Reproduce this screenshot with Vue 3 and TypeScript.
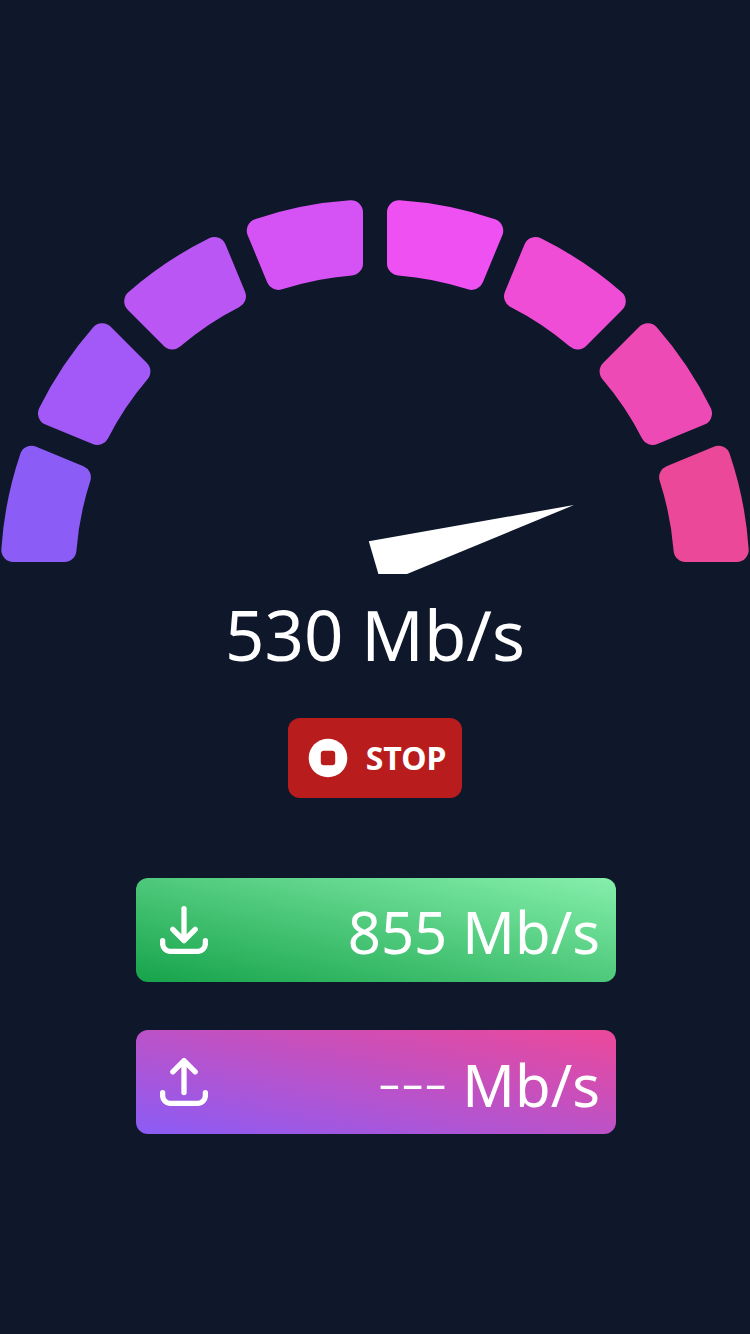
<script setup lang="ts">
interface Point {
  x: number
  y: number
}

const WIDTH = 750
const HEIGHT = 375
const OUTER = 374.5
const INNER = 299.5
const INSET = 12
const CORNER = 12

const colors: string[] = [
  '#8b5cf6',
  '#a259f7',
  '#ba56f3',
  '#d553f4',
  '#ef50f2',
  '#ef4dd6',
  '#ee4ab5',
  '#ec4899',
]

const center: Point = { x: WIDTH / 2, y: HEIGHT }

// Maps a point given along a ray and perpendicular to it onto the canvas.
function place(angle: number, along: number, side: number): Point {
  return {
    x: center.x + along * Math.cos(angle) - side * Math.sin(angle),
    y: center.y + along * Math.sin(angle) + side * Math.cos(angle),
  }
}

function show(p: Point): string {
  return `${p.x.toFixed(2)} ${p.y.toFixed(2)}`
}

// Tangent points of one rounded corner: on the straight side and on the arc.
function corner(angle: number, sign: number, radius: number, fillet: number) {
  const middle = radius - fillet
  const side = INSET + CORNER
  const along = Math.sqrt(middle * middle - side * side)
  const scale = radius / middle
  return {
    line: show(place(angle, along, sign * INSET)),
    arc: show(place(angle, along * scale, sign * side * scale)),
  }
}

function segmentPath(index: number): string {
  const step = Math.PI / colors.length
  const start = Math.PI + index * step
  const end = start + step
  const a = corner(start, 1, OUTER, CORNER)
  const b = corner(end, -1, OUTER, CORNER)
  const c = corner(end, -1, INNER, -CORNER)
  const d = corner(start, 1, INNER, -CORNER)
  const round = `A${CORNER} ${CORNER} 0 0 1`
  return [
    `M${a.line}`,
    `${round} ${a.arc}`,
    `A${OUTER} ${OUTER} 0 0 1 ${b.arc}`,
    `${round} ${b.line}`,
    `L${c.line}`,
    `${round} ${c.arc}`,
    `A${INNER} ${INNER} 0 0 0 ${d.arc}`,
    `${round} ${d.line}`,
    'Z',
  ].join(' ')
}

const segments = colors.map((fill, index) => ({ fill, d: segmentPath(index) }))
</script>

<template>
  <main class="page">
    <svg class="gauge" :viewBox="`0 0 ${WIDTH} ${HEIGHT}`" aria-hidden="true">
      <path v-for="s in segments" :key="s.fill" :d="s.d" :fill="s.fill" />
      <polygon points="368.8,342.3 574,306 407,375 378.4,375" fill="#fff" />
    </svg>

    <p class="speed">530 Mb/s</p>

    <button class="stop" type="button">
      <svg class="stop-icon" viewBox="0 0 48 48" aria-hidden="true">
        <circle cx="24" cy="24" r="19.3" fill="#fff" />
        <rect x="16.8" y="16.8" width="14.4" height="14.4" rx="3" fill="#b91c1c" />
      </svg>
      <span>STOP</span>
    </button>

    <section class="results">
      <div class="bar download">
        <svg class="bar-icon" viewBox="0 0 48 48" aria-hidden="true">
          <path d="M2.6 34.6V37.4a8 8 0 0 0 8 8H37.4a8 8 0 0 0 8-8V34.6" />
          <path d="M24 2.7V34.5M12.8 23.4L24 34.6L35.2 23.4" />
        </svg>
        <span class="value">855 Mb/s</span>
      </div>
      <div class="bar upload">
        <svg class="bar-icon" viewBox="0 0 48 48" aria-hidden="true">
          <path d="M2.6 34.6V37.4a8 8 0 0 0 8 8H37.4a8 8 0 0 0 8-8V34.6" />
          <path d="M24 34.6V2.8M12.8 13.8L24 2.6L35.2 13.8" />
        </svg>
        <span class="value"><span class="pending">---</span> Mb/s</span>
      </div>
    </section>
  </main>
</template>

<style>
body {
  margin: 0;
  background: #0f172a;
}
</style>

<style scoped>
.page {
  box-sizing: border-box;
  min-height: 100vh;
  padding-bottom: 1px;
  display: flex;
  flex-direction: column;
  align-items: center;
  justify-content: center;
  background: #0f172a;
  color: #fff;
  font-family: 'Segoe UI', 'Noto Sans', 'Open Sans', sans-serif;
}

.gauge {
  display: block;
  width: 100%;
}

.speed {
  margin: 12px 0 36px;
  font-size: 69px;
  line-height: 96px;
}

.stop {
  display: flex;
  align-items: center;
  gap: 14px;
  height: 80px;
  padding: 0 16px;
  border: 0;
  border-radius: 12px;
  background: #b91c1c;
  color: #fff;
  font-family: inherit;
  font-size: 32px;
  font-weight: 700;
  line-height: 48px;
  cursor: pointer;
}

.stop-icon {
  width: 48px;
  height: 48px;
}

.results {
  display: flex;
  flex-direction: column;
  gap: 48px;
  width: 100%;
  max-width: 480px;
  margin-top: 80px;
  padding-left: 2px;
}

.bar {
  box-sizing: border-box;
  display: flex;
  align-items: center;
  justify-content: space-between;
  height: 104px;
  padding: 0 16px 0 24px;
  border-radius: 12px;
}

.download {
  background: linear-gradient(to top right, #16a34a, #86efac);
}

.upload {
  background: linear-gradient(to top right, #8b5cf6, #ec4899);
}

.bar-icon {
  width: 48px;
  height: 48px;
  fill: none;
  stroke: #fff;
  stroke-width: 5.3;
  stroke-linecap: round;
  stroke-linejoin: round;
}

.value {
  padding-top: 4px;
  font-size: 58px;
  line-height: 80px;
}

.pending {
  font-family: 'Open Sans', 'Noto Sans', sans-serif;
  font-size: 72px;
  font-weight: 300;
  line-height: 1;
}
</style>
